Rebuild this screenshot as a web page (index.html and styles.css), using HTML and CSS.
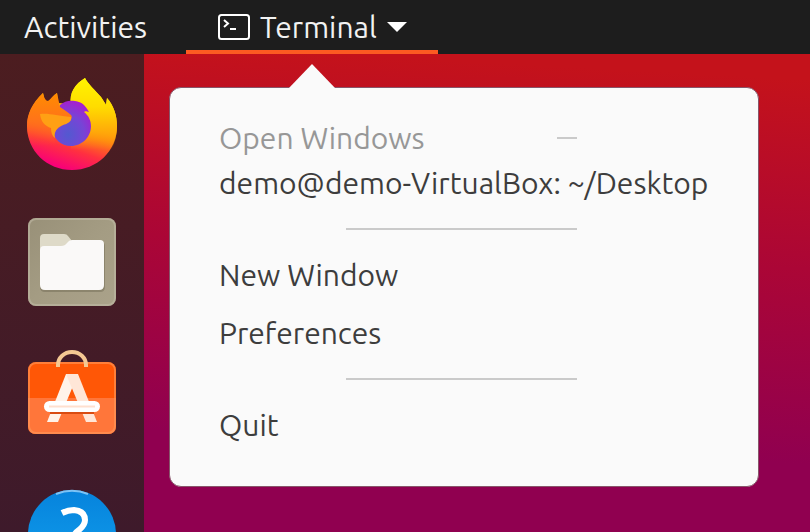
FILE: index.html
```html
<!DOCTYPE html>
<html lang="en">
<head>
    <meta charset="UTF-8">
    <meta name="viewport" content="width=device-width, initial-scale=1.0">
    <title>Desktop</title>
    <link rel="stylesheet" href="styles.css">
</head>
<body>
    <header class="topbar">
        <button type="button" class="activities">Activities</button>
        <div class="app-menu">
            <button type="button" class="app-button" aria-haspopup="menu" aria-expanded="true" aria-controls="appPopover">
                <svg class="terminal-icon" viewBox="0 0 32 26" aria-hidden="true">
                    <rect x="1" y="1" width="30" height="24" rx="2.5" fill="none" stroke="#fff" stroke-width="2"/>
                    <path d="M6 6l4 3.500-4 3.500" fill="none" stroke="#fff" stroke-width="2"/>
                    <path d="M12 15h6" stroke="#fff" stroke-width="2"/>
                </svg>
                <span>Terminal</span>
                <svg class="arrow-icon" viewBox="0 0 20 10" aria-hidden="true">
                    <path d="M0 0h20L10 10z" fill="#fff"/>
                </svg>
            </button>

            <div class="popover" id="appPopover">
                <svg class="popover-arrow" viewBox="0 0 48 25" aria-hidden="true">
                    <path d="M0 25L24 0l24 25z" fill="#fafafa"/>
                </svg>
                <div class="menu-heading">
                    <span>Open Windows</span>
                    <span class="heading-line"></span>
                </div>
                <button type="button" class="menu-item">demo@demo-VirtualBox: ~/Desktop</button>
                <hr class="separator">
                <button type="button" class="menu-item">New Window</button>
                <button type="button" class="menu-item">Preferences</button>
                <hr class="separator">
                <button type="button" class="menu-item">Quit</button>
            </div>
        </div>
    </header>

    <main class="desktop">
        <nav class="dock" aria-label="Dock">
            <button type="button" class="dock-item" aria-label="Firefox">
                <svg viewBox="0 0 92 92" aria-hidden="true">
                    <defs>
                        <linearGradient id="foxBody" x1="0.75" y1="0.1" x2="0.45" y2="1">
                            <stop offset="0" stop-color="#fff000"/>
                            <stop offset="0.3" stop-color="#ffc400"/>
                            <stop offset="0.54" stop-color="#ff8210"/>
                            <stop offset="0.76" stop-color="#ff3040"/>
                            <stop offset="1" stop-color="#f80078"/>
                        </linearGradient>
                        <linearGradient id="foxFace" x1="0" y1="0" x2="0" y2="1">
                            <stop offset="0" stop-color="#ff8c00"/>
                            <stop offset="0.5" stop-color="#ff7418"/>
                            <stop offset="1" stop-color="#ff5a28" stop-opacity="0"/>
                        </linearGradient>
                        <linearGradient id="foxTail" x1="0" y1="0" x2="0" y2="1">
                            <stop offset="0" stop-color="#fff400"/>
                            <stop offset="0.4" stop-color="#ffdc00"/>
                            <stop offset="0.7" stop-color="#ffb008"/>
                            <stop offset="1" stop-color="#ff980e" stop-opacity="0"/>
                        </linearGradient>
                        <radialGradient id="foxGlobe" cx="0.4" cy="0.75" r="0.85">
                            <stop offset="0" stop-color="#5359d0"/>
                            <stop offset="0.5" stop-color="#7744d6"/>
                            <stop offset="1" stop-color="#b414cb"/>
                        </radialGradient>
                    </defs>
                    <path d="M59-2c3 6 10 12 16 19 2 3 4 6 5 8l1-7c7 8 10 18 10 28 0 25-20 44-45 44S1 71 1 46c0-11 5-22 16-33l2 9c3 0 5-2 6-3l6-6 1 10 13 1c-2-11 4-20 14-26z" fill="url(#foxBody)"/>
                    <path d="M59-2c3 6 10 12 16 19 2 3 4 6 5 8l1-7c7 8 10 18 10 28 0 9-2 17-6 24H45V24c-2-11 4-20 14-26z" fill="url(#foxTail)"/>
                    <path d="M34 25c4-4 10-5 15-4 7 1 10 4 14 11-3-1-4-1-5 0 5 4 7 9 7 14 0 11-9 20-20 20-10 0-18-7-18-17 0-9 3-17 7-24z" fill="url(#foxGlobe)"/>
                    <path d="M17 13C6 23 1 34 1 46c0 8 2 14 5 20h25c-3-4-4-9-3-15l6-4 11-8c1-1 1-3 0-4-3-3-7-5-11-8l-3-14c-4 2-6 6-9 8-2 0-4-3-5-8z" fill="url(#foxFace)"/>
                    <path d="M14 34c10-1 17 2 31 3 2 7-9 7-13 11-3 3-4 6-3 10-3-2-4-6-4-10-6-2-10-6-11-14z" fill="#ffa014"/>
                </svg>
            </button>
            <button type="button" class="dock-item" aria-label="Files">
                <svg viewBox="0 0 92 92" aria-hidden="true">
                    <defs>
                        <linearGradient id="filesBack" x1="0" y1="0" x2="1" y2="1">
                            <stop offset="0" stop-color="#989078"/>
                            <stop offset="0.5" stop-color="#a49c83"/>
                            <stop offset="1" stop-color="#aaa28a"/>
                        </linearGradient>
                    </defs>
                    <rect x="2" y="2" width="88" height="88" rx="8" fill="url(#filesBack)"/>
                    <rect x="3" y="3" width="86" height="86" rx="7" fill="none" stroke="#c0b9a5" stroke-width="2" opacity=".6"/>
                    <path d="M14 22q0-4 4-4h20q3 0 4 2l4 5v14H14z" fill="#dedac8"/>
                    <path d="M14 35q0-4 4-4h17q4 0 6-3 2-2 5-2h29q4 0 4 4v41q0 5-5 5H19q-5 0-5-5z" fill="#6c654f" opacity=".45"/>
                    <path d="M14 34q0-4 4-4h17q4 0 6-3 2-3 5-3h28q4 0 4 4v41q0 5-5 5H19q-5 0-5-5z" fill="#faf9f8"/>
                </svg>
            </button>
            <button type="button" class="dock-item" aria-label="Ubuntu Software">
                <svg viewBox="0 0 92 92" aria-hidden="true">
                    <rect x="2" y="10" width="88" height="72" rx="8" fill="#ff5706"/>
                    <path d="M2 46h88v28q0 8-8 8H10q-8 0-8-8z" fill="#ff763a"/>
                    <rect x="3" y="11" width="86" height="70" rx="7" fill="none" stroke="#ff9a5c" stroke-width="2" opacity=".6"/>
                    <path d="M32 15v-2a14 13 0 0 1 28 0v2" fill="none" stroke="#f5c893" stroke-width="4"/>
                    <path d="M40 22h12L32 70H21z" fill="#fff3e9"/>
                    <path d="M40 22h12l19 48H60z" fill="#ffe6d7"/>
                    <path d="M24 60h44" stroke="#d94c12" stroke-width="4"/>
                    <rect x="18" y="49" width="56" height="11" rx="5.5" fill="#fff"/>
                    <path d="M23 54.500h46" stroke="#ffe0cf" stroke-width="2"/>
                </svg>
            </button>
            <button type="button" class="dock-item" aria-label="Help">
                <svg viewBox="0 0 92 92" aria-hidden="true">
                    <defs>
                        <linearGradient id="helpBack" x1="0" y1="0" x2="0" y2="1">
                            <stop offset="0" stop-color="#0683dc"/>
                            <stop offset="1" stop-color="#12a0ee"/>
                        </linearGradient>
                    </defs>
                    <circle cx="46" cy="46" r="44" fill="url(#helpBack)"/>
                    <path d="M30 6a43 43 0 0 1 32 0" fill="none" stroke="#7cc3f5" stroke-width="2"/>
                    <path d="M36 25q6-3 12-3 11 1 11 10 0 5-6 10-7 5-7 13" fill="none" stroke="#fff" stroke-width="6"/>
                    <circle cx="46" cy="67" r="4" fill="#fff"/>
                </svg>
            </button>
        </nav>
        <div class="wallpaper"></div>
    </main>

    <script>
        const appButton = document.querySelector(".app-button");
        const popover = document.getElementById("appPopover");

        // Open or close the application menu
        appButton.addEventListener("click", () => {
            popover.hidden = !popover.hidden;
            appButton.setAttribute("aria-expanded", String(!popover.hidden));
        });
    </script>
</body>
</html>
```
FILE: styles.css
```css
* {
    margin: 0;
    padding: 0;
    box-sizing: border-box;
}

body {
    display: flex;
    flex-direction: column;
    height: 100vh;
    overflow: hidden;
    font-family: Ubuntu, "Noto Sans", sans-serif;
    font-size: 30px;
    line-height: 32px;
    color: #3d3d3d;
    background-color: #1d1d1d;
}

button {
    border: none;
    background: none;
    font: inherit;
    color: inherit;
    cursor: pointer;
}

.topbar {
    display: flex;
    flex: none;
    gap: 15px;
    height: 54px;
    background-color: #1d1d1d;
    color: #f2f2f2;
}

.activities {
    padding: 0 24px;
}

.app-menu {
    position: relative;
    display: flex;
}

.app-button {
    display: flex;
    align-items: center;
    gap: 10px;
    padding: 4px 31px 0 32px;
    border-bottom: 4px solid #fc5a22;
}

.terminal-icon {
    width: 32px;
    height: 26px;
}

.arrow-icon {
    width: 20px;
    height: 10px;
}

.popover {
    position: absolute;
    top: 87px;
    left: -17px;
    z-index: 1;
    min-width: 590px;
    padding: 34px 49px 32px;
    border: 1px solid #87566a;
    border-radius: 12px;
    background-color: #fafafa;
    color: #3d3d3d;
}

.popover[hidden] {
    display: none;
}

.popover-arrow {
    position: absolute;
    top: -24px;
    left: 118px;
    width: 48px;
    height: 25px;
}

.menu-heading {
    display: flex;
    align-items: center;
    justify-content: space-between;
    padding-right: 132px;
    color: #979797;
}

.heading-line {
    width: 20px;
    height: 2px;
    background-color: #cacaca;
}

.menu-item {
    display: block;
    width: 100%;
    padding: 13px 0;
    text-align: left;
    white-space: nowrap;
}

.separator {
    height: 2px;
    margin: 16px 132px 16px 127px;
    border: none;
    background-color: #cacaca;
}

.desktop {
    display: flex;
    flex: 1;
    min-height: 0;
}

.dock {
    display: flex;
    flex: none;
    flex-direction: column;
    align-items: center;
    gap: 44px;
    width: 144px;
    padding-top: 26px;
    overflow: hidden;
    background: linear-gradient(#4c1d20, #3e1a2b);
}

.dock-item {
    flex: none;
    width: 92px;
    height: 92px;
}

.dock-item svg {
    display: block;
    width: 100%;
    height: 100%;
    overflow: visible;
}

.wallpaper {
    flex: 1;
    background: linear-gradient(183deg, #c4121b 5%, #ab0636 42%, #900050 80%);
}
```
